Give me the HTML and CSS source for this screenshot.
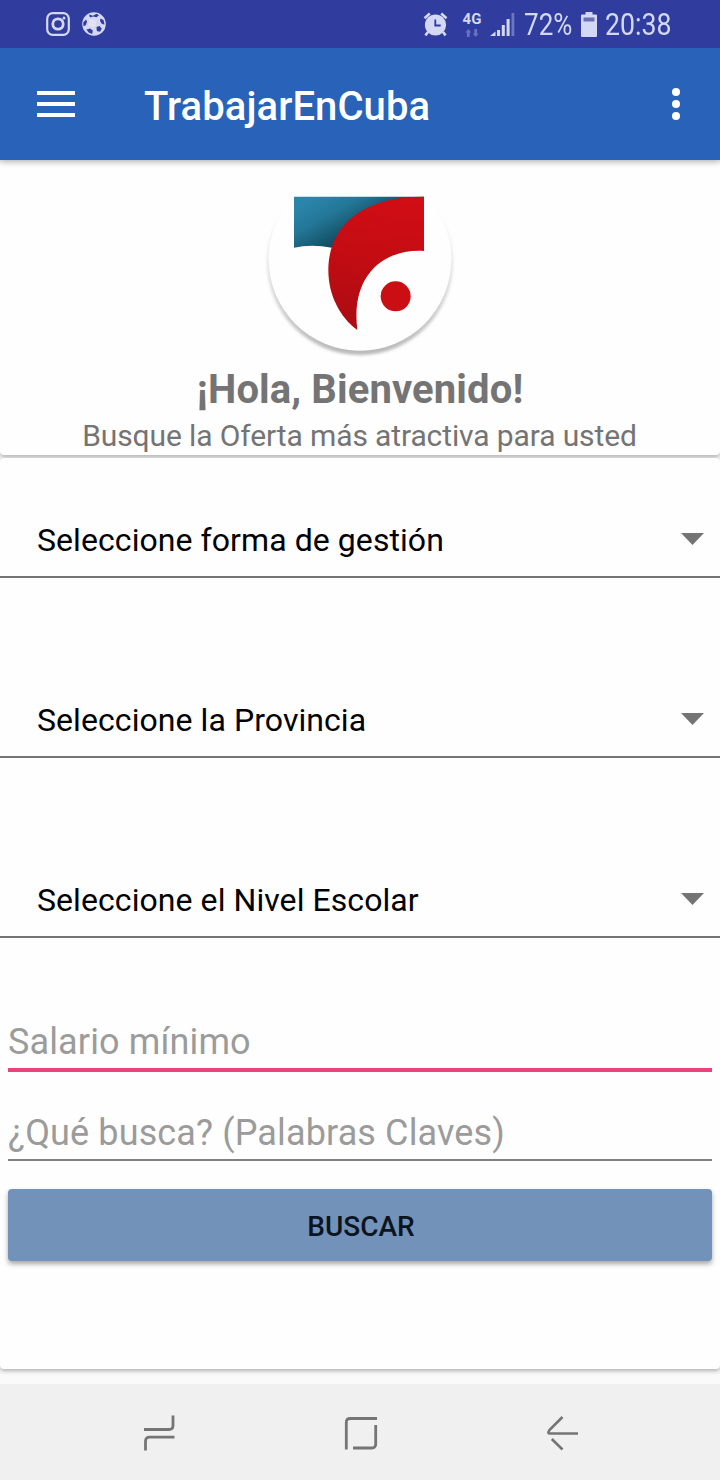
FILE: index.html
```html
<!DOCTYPE html>
<html lang="es">
<head>
    <meta charset="UTF-8">
    <meta name="viewport" content="width=device-width, initial-scale=1.0">
    <title>TrabajarEnCuba</title>
    <link rel="stylesheet" href="styles.css">
</head>
<body>
    <div class="status-bar">
        <svg class="status-instagram" width="24" height="24" viewBox="0 0 24 24" fill="none" stroke="#d3d9f5" stroke-width="2.2">
            <rect x="1.2" y="1.2" width="21.6" height="21.6" rx="5.5"/>
            <circle cx="12" cy="12" r="5.2" stroke-width="2.8"/>
            <circle cx="18" cy="6" r="1.5" fill="#d3d9f5" stroke="none"/>
        </svg>
        <svg class="status-ball" width="24" height="24" viewBox="0 0 24 24">
            <circle cx="12" cy="12" r="11.8" fill="#d3d9f5"/>
            <path d="M7 2.500l4 1.200 3.500-2 2.500 1.500-2.500 2-3.500-.8-3 1zM1.200 10.500l2.800-3 1 2-1 3.500-2.500 1.200zM18.500 6.500l3 1.500 1 4.500-2.500-.6-2-2.800zM14.500 15l3.100-1 2.200 2.800-1.800 3-3.200-.8zM4.500 17.400l3.500-1 2.800 2.200-.6 3.400-3.600-1.400z" fill="#303d9e"/>
            <path d="M8 7l5.400 1 1 5-4 2.400-4.600-2.600z" fill="#e4e1f4"/>
        </svg>
        <svg class="status-alarm" width="25" height="25" viewBox="0 0 25 25">
            <circle cx="12.5" cy="13" r="10.6" fill="#d3d9f5"/>
            <path d="M1.500 6.200l5.300-4.600M23.500 6.200l-5.300-4.600M5 20l-2.600 3.400M20 20l2.600 3.400" stroke="#d3d9f5" stroke-width="2.600" fill="none"/>
            <path d="M12.300 7.500v6h5.400" stroke="#303d9e" stroke-width="1.800" fill="none"/>
        </svg>
        <div class="network">
            <span>4G</span>
            <svg width="14" height="8" viewBox="0 0 14 8" fill="#6771bd">
                <path d="M3.300 0l3 3.500H4.700V8H1.900V3.500H.3zM10.700 8l3-3.500h-1.600V0H9.300v4.500H7.700z"/>
            </svg>
        </div>
        <svg class="signal" width="26" height="24" viewBox="0 0 26 24" fill="#d3d9f5">
            <path d="M0 24l5.500-4.500V24zM7 18h3v6H7zM11.800 13h3v11h-3zM16.600 7h3v17h-3z"/>
            <path d="M21.500 1h2.800v23h-2.800z" fill="#6b76c4"/>
        </svg>
        <span class="battery-text">72%</span>
        <svg class="battery" width="16" height="25" viewBox="0 0 16 25" fill="#d3d9f5">
            <path d="M4.500 0h7v2.500H15q1 0 1 1V24q0 1-1 1H1q-1 0-1-1V3.500q0-1 1-1h3.500z"/>
            <path d="M2.500 5.500h11v4h-11z" fill="#6871b5"/>
        </svg>
        <span class="clock">20:38</span>
    </div>

    <header class="toolbar">
        <svg class="menu" width="38" height="26" viewBox="0 0 38 26" fill="#fff">
            <path d="M0 0h38v4H0zM0 11h38v4H0zM0 22h38v4H0z"/>
        </svg>
        <h1>TrabajarEnCuba</h1>
        <svg class="more" width="8" height="32" viewBox="0 0 8 32" fill="#fff">
            <circle cx="4" cy="4" r="4"/>
            <circle cx="4" cy="16" r="4"/>
            <circle cx="4" cy="28" r="4"/>
        </svg>
    </header>

    <main>
        <section class="card welcome">
            <svg class="logo" width="220" height="190" viewBox="0 0 660 570">
                <defs>
                    <linearGradient id="blue" x1="180" y1="60" x2="260" y2="205" gradientUnits="userSpaceOnUse">
                        <stop offset="0" stop-color="#2b85aa"/>
                        <stop offset=".4" stop-color="#237797"/>
                        <stop offset="1" stop-color="#104357"/>
                    </linearGradient>
                    <linearGradient id="red" x1="400" y1="50" x2="340" y2="440" gradientUnits="userSpaceOnUse">
                        <stop offset="0" stop-color="#d10d15"/>
                        <stop offset=".4" stop-color="#c60c13"/>
                        <stop offset="1" stop-color="#ac0c12"/>
                    </linearGradient>
                    <linearGradient id="rim" x1="0" y1="0" x2="0" y2="1">
                        <stop offset=".2" stop-color="#999" stop-opacity="0"/>
                        <stop offset=".5" stop-color="#999" stop-opacity=".25"/>
                        <stop offset="1" stop-color="#888" stop-opacity=".6"/>
                    </linearGradient>
                    <filter id="soft"><feGaussianBlur stdDeviation="4"/></filter>
                </defs>
                <circle cx="330" cy="246" r="279" fill="url(#rim)" filter="url(#soft)"/>
                <circle cx="330" cy="238" r="274" fill="#fefefe"/>
                <path d="M132 50h390v20L246 203q-62-11-114 0z" fill="url(#blue)"/>
                <path d="M522 50V213C395 206 302 290 322 450C270 412 235 345 235 270C235 140 335 48 522 50z" fill="url(#red)"/>
                <circle cx="437" cy="349" r="45" fill="#cb0d14"/>
            </svg>
            <h2>¡Hola, Bienvenido!</h2>
            <p>Busque la Oferta más atractiva para usted</p>
        </section>

        <form class="card search-form">
            <div class="spinner">
                <span>Seleccione forma de gestión</span>
                <svg width="23" height="12" viewBox="0 0 23 12"><path d="M0 0h23L11.500 12z" fill="#747474"/></svg>
            </div>
            <div class="spinner">
                <span>Seleccione la Provincia</span>
                <svg width="23" height="12" viewBox="0 0 23 12"><path d="M0 0h23L11.500 12z" fill="#747474"/></svg>
            </div>
            <div class="spinner">
                <span>Seleccione el Nivel Escolar</span>
                <svg width="23" height="12" viewBox="0 0 23 12"><path d="M0 0h23L11.500 12z" fill="#747474"/></svg>
            </div>
            <input class="salary" type="text" name="salario" placeholder="Salario mínimo">
            <input class="keywords" type="text" name="palabras" placeholder="¿Qué busca? (Palabras Claves)">
            <button type="submit">BUSCAR</button>
        </form>
    </main>

    <nav class="nav-bar">
        <svg width="34" height="38" viewBox="0 0 34 38" fill="none" stroke="#757575" stroke-width="2.800">
            <path d="M1 16.500h25q4 0 4-4V2.500M31.500 24.200H6.500q-4 0-4 4v9.300"/>
        </svg>
        <svg width="34" height="38" viewBox="0 0 34 38" fill="none" stroke="#757575" stroke-width="2.800">
            <path d="M2.300 36.500V9.500q0-4 4-4H33M31.700 12v19q0 4-4 4H9"/>
        </svg>
        <svg width="34" height="38" viewBox="0 0 34 38" fill="none" stroke="#757575" stroke-width="2.600">
            <path d="M17.500 4L4.400 17.200Q2 20.500 5 20.500H33M6.800 26L17.500 36.500"/>
        </svg>
    </nav>
</body>
</html>
```

FILE: styles.css
```css
* {
    box-sizing: border-box;
}
body {
    margin: 0;
    height: 1480px;
    display: flex;
    flex-direction: column;
    font-family: Roboto, "Liberation Sans", sans-serif;
    background-color: #fafafa;
    overflow: hidden;
}
svg {
    display: block;
    flex: none;
}
h1, h2, p {
    margin: 0;
}
.status-bar {
    display: flex;
    align-items: center;
    height: 48px;
    padding-left: 46px;
    background-color: #303d9e;
    color: #d3d9f5;
    z-index: 2;
}
.status-ball {
    margin-left: 12px;
}
.status-alarm {
    margin-left: 317px;
}
.network {
    display: flex;
    flex-direction: column;
    align-items: center;
    width: 20px;
    margin-left: 14px;
    gap: 3px;
    font-size: 15px;
    font-weight: 700;
    line-height: 14px;
}
.signal {
    margin-left: 8px;
}
.battery-text, .clock {
    font-size: 31px;
    line-height: 48px;
    width: 48px;
    margin-left: 8px;
    padding-top: 2px;
    white-space: nowrap;
    transform: scaleX(0.84);
    transform-origin: left;
}
.battery {
    margin-left: 9px;
}
.clock {
    width: 66px;
    margin-left: 8px;
    transform: scaleX(0.86);
}
.toolbar {
    display: flex;
    align-items: center;
    height: 112px;
    padding: 0 40px 0 37px;
    background-color: #2962b9;
    color: #fff;
    box-shadow: 0 2px 6px rgba(0, 0, 0, 0.3);
    z-index: 1;
}
.toolbar h1 {
    flex: 1;
    margin-left: 69px;
    padding-top: 4px;
    font-size: 40px;
    font-weight: 500;
    letter-spacing: 0.08px;
}
main {
    flex: 1;
}
.card {
    background-color: #fefefe;
    border-radius: 4px;
    box-shadow: 0 2px 4px rgba(0, 0, 0, 0.3);
}
.welcome {
    height: 295px;
    padding-top: 20px;
    text-align: center;
    color: #747474;
}
.logo {
    margin: 0 auto;
}
.welcome h2 {
    margin-top: -4px;
    font-size: 40px;
    line-height: 47px;
    letter-spacing: 0.12px;
}
.welcome p {
    margin-top: 5px;
    padding-right: 1px;
    font-size: 30px;
    line-height: 35px;
    letter-spacing: -0.12px;
}
.search-form {
    height: 911px;
    margin-top: 3px;
    padding-top: 44px;
}
.spinner {
    display: flex;
    align-items: center;
    justify-content: space-between;
    height: 76px;
    margin-bottom: 104px;
    padding: 0 16px 0 37px;
    border-bottom: 2px solid #757575;
    font-size: 32px;
    letter-spacing: 0.07px;
    color: #000;
}
.spinner span {
    padding-top: 2px;
}
.search-form input {
    display: block;
    width: 704px;
    margin: 0 8px;
    padding: 2px 0 0;
    border: none;
    border-bottom: 2px solid #808080;
    background: none;
    font-family: inherit;
    font-size: 36px;
    letter-spacing: 0.13px;
    outline: none;
}
.search-form input::placeholder {
    color: #9b9b9b;
    opacity: 1;
}
.search-form .salary {
    height: 58px;
    margin-top: -28px;
    border-bottom: 4px solid #e8457c;
}
.search-form .keywords {
    height: 58px;
    margin-top: 31px;
    padding-top: 4px;
}
button {
    display: block;
    width: 704px;
    height: 72px;
    margin: 28px 8px 0;
    padding: 2px 0 0 2px;
    border: none;
    border-radius: 4px;
    background-color: #7392b9;
    box-shadow: 0 3px 5px rgba(0, 0, 0, 0.35);
    color: #0b151f;
    font-family: inherit;
    font-size: 28px;
    font-weight: 500;
}
.nav-bar {
    display: flex;
    align-items: center;
    justify-content: space-between;
    height: 96px;
    padding: 0 141px 0 143px;
    background-color: #f0f0f0;
    z-index: 1;
}
```
